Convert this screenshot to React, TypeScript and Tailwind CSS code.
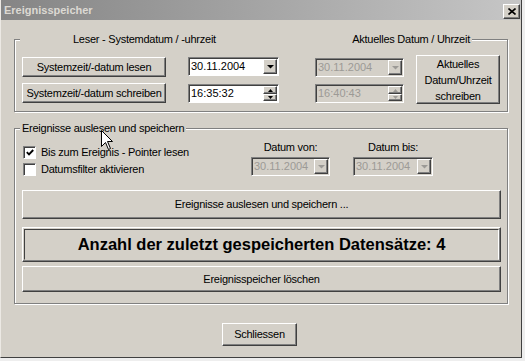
import type { ReactNode } from "react";

const raised =
  "border border-t-white border-l-white border-r-[#404040] border-b-[#404040] shadow-[inset_-1px_-1px_0_#808080] bg-[#d4d0c8]";
const sunken =
  "border border-t-[#808080] border-l-[#808080] border-r-white border-b-white shadow-[inset_1px_1px_0_#404040]";

function Btn({ children, className = "" }: { children: ReactNode; className?: string }) {
  return <div className={`flex items-center justify-center text-center ${raised} ${className}`}>{children}</div>;
}

function Down({ color = "#000" }: { color?: string }) {
  return (
    <svg width="7" height="4" viewBox="0 0 7 4">
      <polygon points="0,0 7,0 3.5,3.6" fill={color} />
    </svg>
  );
}

function Combo({ value, disabled = false, className = "" }: { value: string; disabled?: boolean; className?: string }) {
  return (
    <div
      className={`flex h-[19px] items-center ${sunken} ${
        disabled ? "bg-[#d4d0c8] text-[#9c9a96]" : "bg-white text-black"
      } ${className}`}
    >
      <span className="flex-1 pl-[2px] tracking-normal">{value}</span>
      <div className={`mr-[1px] flex h-[15px] w-[14px] items-center justify-center ${raised}`}>
        <Down color={disabled ? "#9c9a96" : "#000"} />
      </div>
    </div>
  );
}

function Spin({ value, disabled = false }: { value: string; disabled?: boolean }) {
  const c = disabled ? "#9c9a96" : "#000";
  return (
    <div
      className={`flex h-[19px] items-center ${sunken} ${
        disabled ? "bg-[#d4d0c8] text-[#9c9a96]" : "bg-white text-black"
      }`}
    >
      <span className="flex-1 pl-[2px] tracking-normal">{value}</span>
      <div className="mr-[1px] flex h-[15px] w-[14px] flex-col">
        <div className={`flex h-[8px] items-center justify-center ${raised}`}>
          <svg width="5" height="3" viewBox="0 0 5 3">
            <polygon points="0,3 5,3 2.5,0" fill={c} />
          </svg>
        </div>
        <div className={`flex h-[7px] items-center justify-center ${raised}`}>
          <svg width="5" height="3" viewBox="0 0 5 3">
            <polygon points="0,0 5,0 2.5,3" fill={c} />
          </svg>
        </div>
      </div>
    </div>
  );
}

function Check({ checked, label }: { checked: boolean; label: string }) {
  return (
    <div className="flex h-[17px] items-center gap-[5px]">
      <div className={`flex h-[13px] w-[13px] items-center justify-center bg-white ${sunken}`}>
        {checked && (
          <svg width="8" height="7" viewBox="0 0 8 7">
            <polyline points="0.8,3.2 3,5.4 7.2,1" fill="none" stroke="#000" strokeWidth="1.9" />
          </svg>
        )}
      </div>
      <span>{label}</span>
    </div>
  );
}

const group =
  "border border-[#808080] shadow-[inset_1px_1px_0_#fff,1px_1px_0_#fff]";

export default function App() {
  return (
    <div className="relative h-[361px] w-[525px] overflow-hidden bg-[#eeeeee] font-['Liberation_Sans',Arial,sans-serif] text-[11px] leading-[13px] tracking-[-0.25px] text-black">
      <div className="flex h-[358px] w-[522px] flex-col border-b border-l border-r border-b-[#404040] border-l-[#ece9e4] border-r-[#404040] bg-[#d4d0c8]">
        {/* Titelleiste */}
        <div className="flex h-[20px] items-center justify-between bg-linear-to-r from-[#858585] to-[#c6c6c6] pl-[3px] pr-[1px]">
          <span className="text-[11px] font-bold tracking-normal text-[#dcd9d3]">Ereignisspeicher</span>
          <div className={`mt-[2px] flex h-[15px] w-[17px] items-center justify-center ${raised}`}>
            <svg width="8" height="7" viewBox="0 0 8 7">
              <path d="M0.5 0.5L7.5 6.5M7.5 0.5L0.5 6.5" stroke="#000" strokeWidth="1.6" />
            </svg>
          </div>
        </div>

        <div className="flex flex-col pl-[13px]">
          {/* Leser - Systemdatum */}
          <fieldset className={`mt-[12px] h-[80px] w-[494px] ${group}`}>
            <legend className="ml-[5px] flex w-[452px] justify-between bg-[#d4d0c8] pl-[53px] pr-[2px] leading-[14px]">
              <span>Leser - Systemdatum / -uhrzeit</span>
              <span>Aktuelles Datum / Uhrzeit</span>
            </legend>
            <div className="flex items-start pl-[7px] pt-[9px]">
              <div className="mt-[2px] flex flex-col gap-[6px]">
                <Btn className="h-[20px] w-[144px]">Systemzeit/-datum lesen</Btn>
                <Btn className="h-[20px] w-[144px]">Systemzeit/-datum schreiben</Btn>
              </div>
              <div className="ml-[22px] mt-[2px] flex w-[91px] flex-col gap-[8px]">
                <Combo value="30.11.2004" />
                <Spin value="16:35:32" />
              </div>
              <div className="ml-[36px] mt-[3px] flex w-[89px] flex-col gap-[7px]">
                <Combo value="30.11.2004" disabled />
                <Spin value="16:40:43" disabled />
              </div>
              <Btn className="ml-[12px] h-[49px] w-[84px] leading-[16px]">
                Aktuelles
                <br />
                Datum/Uhrzeit
                <br />
                schreiben
              </Btn>
            </div>
          </fieldset>

          {/* Ereignisse */}
          <fieldset className={`mt-[9px] h-[183px] w-[494px] ${group}`}>
            <legend className="ml-[5px] bg-[#d4d0c8] px-[2px] leading-[14px]">Ereignisse auslesen und speichern</legend>
            <div className="flex flex-col pl-[7px]">
              <div className="flex items-start pt-[6px]">
                <div className="ml-[1px] mt-[3px] flex w-[228px] flex-none flex-col">
                  <Check checked label="Bis zum Ereignis - Pointer lesen" />
                  <Check checked={false} label="Datumsfilter aktivieren" />
                </div>
                <div className="flex w-[79px] flex-col items-center">
                  <span>Datum von:</span>
                  <Combo value="30.11.2004" disabled className="mt-[3px] w-full" />
                </div>
                <div className="ml-[23px] flex w-[80px] flex-col items-center">
                  <span>Datum bis:</span>
                  <Combo value="30.11.2004" disabled className="mt-[3px] w-full" />
                </div>
              </div>
              <Btn className="mt-[12px] h-[29px] w-[479px]">Ereignisse auslesen und speichern ...</Btn>
              <div className={`mt-[8px] h-[35px] w-[479px] p-[1px] ${raised}`}>
                <div className="flex h-full items-center justify-center border border-b-[#d4d0c8] border-l-[#404040] border-r-white border-t-[#404040] text-[16.5px] font-bold tracking-normal">
                  Anzahl der zuletzt gespeicherten Datensätze: 4
                </div>
              </div>
              <Btn className="mt-[4px] h-[26px] w-[479px]">Ereignisspeicher löschen</Btn>
            </div>
          </fieldset>

          <Btn className="ml-[208px] mt-[19px] h-[23px] w-[75px]">Schliessen</Btn>
        </div>
      </div>

      {/* Mauszeiger */}
      <svg className="absolute left-[101px] top-[130px]" width="13" height="21" viewBox="0 0 13 21">
        <path d="M0.5 0.5V16.5L4.5 12.5L7.5 19.5L9.5 18.5L6.5 11.5H11.5Z" fill="#fff" stroke="#000" strokeWidth="1" />
      </svg>
    </div>
  );
}
